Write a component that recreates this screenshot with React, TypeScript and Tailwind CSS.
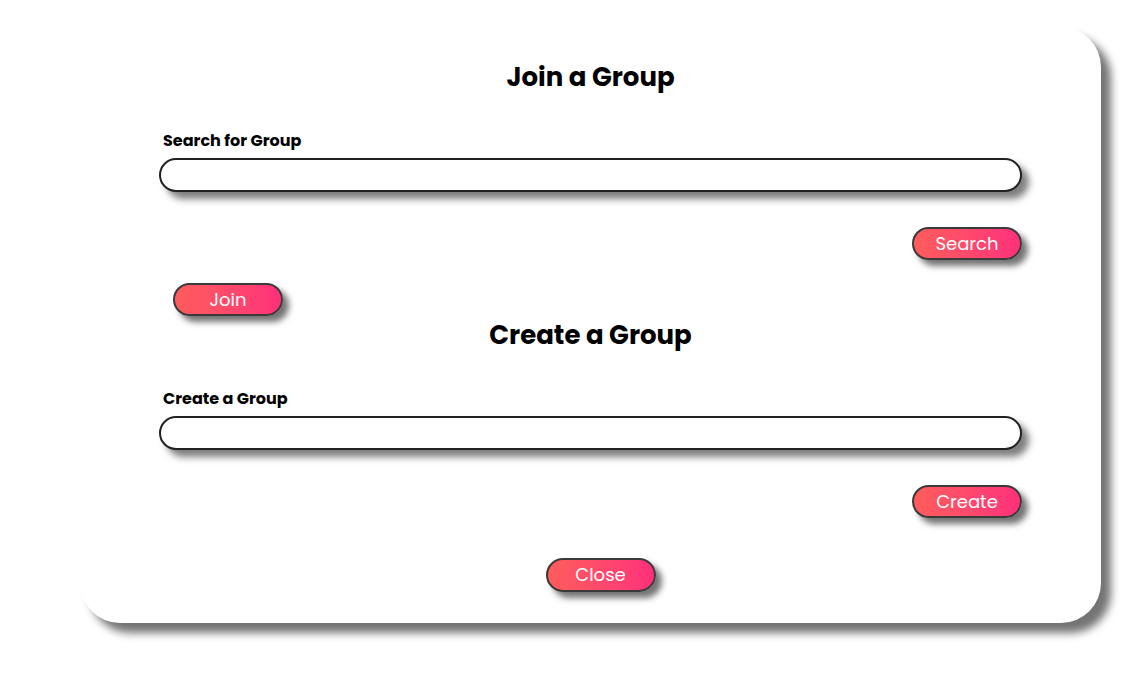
import React from 'react';

const font = { fontFamily: '"Poppins", Inter, "Noto Sans", sans-serif' };

function PillButton({ label, className = '' }: { label: string; className?: string }) {
  return (
    <button
      className={`w-[110px] h-[33px] rounded-full border-2 border-[#3a3a3a] bg-gradient-to-r from-[#ff5c5c] to-[#ff2f7a] text-white text-[18px] leading-none shadow-[6px_6px_6px_rgba(0,0,0,0.55)] ${className}`}
    >
      {label}
    </button>
  );
}

function Field({ label }: { label: string }) {
  return (
    <div className="flex flex-col">
      <label className="pl-[4px] pt-[1px] text-[16px] leading-[20px] font-bold text-black">{label}</label>
      <input
        type="text"
        className="mt-[7px] h-[34px] w-full rounded-full border-2 border-[#222] bg-white px-4 outline-none shadow-[7px_7px_7px_rgba(0,0,0,0.5)]"
      />
    </div>
  );
}

export default function App() {
  return (
    <div className="min-h-screen bg-white pt-[27px]" style={font}>
      <div className="ml-[80px] w-[1021px] rounded-[40px] bg-white pl-[79px] pr-[79px] pt-[34px] pb-[31px] shadow-[10px_10px_9px_rgba(0,0,0,0.55)]">
        <h1 className="text-center text-[26px] leading-[32px] font-bold text-black">Join a Group</h1>

        <div className="mt-[37px]">
          <Field label="Search for Group" />
        </div>

        <div className="mt-[35px] flex justify-end">
          <PillButton label="Search" />
        </div>

        <div className="mt-[23px] pl-[14px]">
          <PillButton label="Join" />
        </div>

        <h2 className="mt-[3px] text-center text-[26px] leading-[32px] font-bold text-black">Create a Group</h2>

        <div className="mt-[37px]">
          <Field label="Create a Group" />
        </div>

        <div className="mt-[35px] flex justify-end">
          <PillButton label="Create" />
        </div>

        <div className="mt-[40px] flex justify-center pl-[20px]">
          <PillButton label="Close" className="h-[34px]" />
        </div>
      </div>
    </div>
  );
}
